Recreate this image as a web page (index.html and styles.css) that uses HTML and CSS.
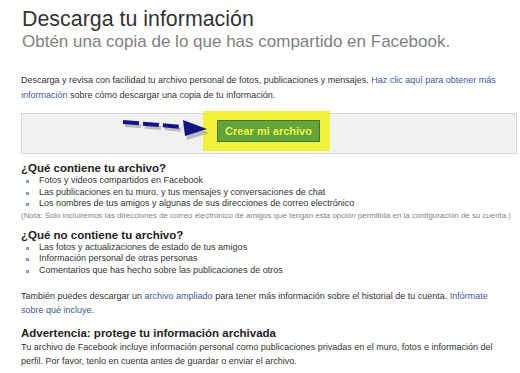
FILE: index.html
```html
<!DOCTYPE html>
<html lang="es">

<head>
    <meta charset="UTF-8">
    <meta name="viewport" content="width=device-width, initial-scale=1.0">
    <title>Descarga tu información</title>
    <link rel="stylesheet" href="styles.css">
</head>

<body>
    <div class="page">
        <h1 class="title">Descarga tu información</h1>
        <h2 class="subtitle">Obtén una copia de lo que has compartido en Facebook.</h2>

        <p class="intro">Descarga y revisa con facilidad tu archivo personal de fotos, publicaciones y mensajes. <a href="#">Haz clic aquí para obtener más</a> <a href="#">información</a> sobre cómo descargar una copia de tu información.</p>

        <div class="download-box">
            <svg class="arrow" width="90" height="26" viewBox="0 0 90 26">
                <g transform="translate(2,3)" fill="#9a9a9a" opacity="0.6">
                    <path d="M0 2 L60 7" stroke="#9a9a9a" stroke-width="4" stroke-dasharray="16 4" fill="none"/>
                    <polygon points="60,0 84,10 62,17"/>
                </g>
                <path d="M0 2 L60 7" stroke="#141487" stroke-width="4" stroke-dasharray="16 4" fill="none"/>
                <polygon points="60,0 84,9 62,16" fill="#141487"/>
            </svg>
            <div class="highlight">
                <button class="create-btn">Crear mi archivo</button>
            </div>
        </div>

        <h3 class="section-title">¿Qué contiene tu archivo?</h3>
        <ul class="list">
            <li>Fotos y videos compartidos en Facebook</li>
            <li>Las publicaciones en tu muro, y tus mensajes y conversaciones de chat</li>
            <li>Los nombres de tus amigos y algunas de sus direcciones de correo electrónico</li>
        </ul>
        <p class="note">(Nota: Solo incluiremos las direcciones de correo electrónico de amigos que tengan esta opción permitida en la configuración de su cuenta.)</p>

        <h3 class="section-title">¿Qué no contiene tu archivo?</h3>
        <ul class="list">
            <li>Las fotos y actualizaciones de estado de tus amigos</li>
            <li>Información personal de otras personas</li>
            <li>Comentarios que has hecho sobre las publicaciones de otros</li>
        </ul>

        <p class="text">También puedes descargar un <a href="#">archivo ampliado</a> para tener más información sobre el historial de tu cuenta. <a href="#">Infórmate</a><br><a href="#">sobre qué incluye</a>.</p>

        <h3 class="section-title warning">Advertencia: protege tu información archivada</h3>
        <p class="text">Tu archivo de Facebook incluye información personal como publicaciones privadas en el muro, fotos e información del<br>perfil. Por favor, tenlo en cuenta antes de guardar o enviar el archivo.</p>
    </div>
</body>

</html>
```

FILE: styles.css
```css
* {
    margin: 0;
    padding: 0;
    box-sizing: border-box;
    font-family: "Liberation Sans", Arial, sans-serif;
}

body {
    background-color: #fff;
    color: #333;
}

.page {
    width: 520px;
    padding: 6px 3px 0 21px;
}

a {
    color: #3b5998;
    text-decoration: none;
}

.title {
    font-size: 21.4px;
    font-weight: normal;
    line-height: 26px;
    color: #333;
    padding-left: 1px;
}

.subtitle {
    font-size: 17px;
    font-weight: normal;
    line-height: 20px;
    color: #7f7f7f;
    padding-left: 1px;
}

.intro {
    margin-top: 21px;
    font-size: 9px;
    line-height: 15px;
}

.download-box {
    position: relative;
    margin-top: 10px;
    height: 41px;
    background-color: #f0f1f1;
    border: 1px solid #d6d8d8;
    display: flex;
    justify-content: center;
}

.arrow {
    position: absolute;
    left: 101px;
    top: 6px;
}

.highlight {
    margin-top: -3px;
    margin-left: -5px;
    width: 127px;
    height: 40px;
    background-color: #f2f23a;
    display: flex;
    align-items: center;
    justify-content: center;
}

.create-btn {
    border: 1px solid #3f7a22;
    background-color: #62a33a;
    color: #eef24a;
    font-size: 11px;
    font-weight: bold;
    width: 103px;
    height: 22px;
    margin-left: 4px;
}

.section-title {
    margin-top: 7px;
    font-size: 11.5px;
    font-weight: bold;
    color: #222;
    line-height: 14px;
}

.list {
    list-style: none;
    padding-left: 5px;
}

.list li {
    font-size: 9px;
    line-height: 11.5px;
    position: relative;
    padding-left: 13px;
}

.list li::before {
    content: "";
    position: absolute;
    left: 0;
    top: 5px;
    width: 3px;
    height: 3px;
    background-color: #8c9bb6;
}

.note {
    font-size: 7.9px;
    line-height: 11px;
    color: #7f7f7f;
}

.text {
    margin-top: 14px;
    font-size: 9px;
    line-height: 13.5px;
}

.warning {
    margin-top: 9px;
}

.warning + .text {
    margin-top: 1px;
}
```
